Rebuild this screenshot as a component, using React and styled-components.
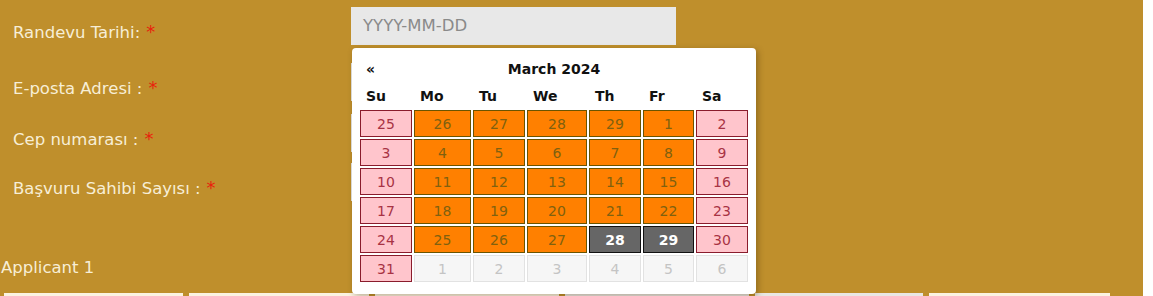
import React from "react";
import styled, { createGlobalStyle } from "styled-components";

const GlobalStyle = createGlobalStyle`
  html, body {
    margin: 0;
    padding: 0;
    background: #ffffff;
    overflow: hidden;
  }
  * {
    box-sizing: border-box;
  }
`;

const Page = styled.div`
  position: relative;
  width: 1143px;
  height: 296px;
  background: #bf8f2c;
  font-family: "DejaVu Sans", Tahoma, sans-serif;
  color: #f7eed6;
  overflow: hidden;
`;

const Form = styled.div`
  display: flex;
  flex-direction: column;
  padding-top: 7px;
`;

const Row = styled.div`
  display: grid;
  grid-template-columns: 351px 325px;
  height: ${(p) => p.h}px;
`;

const Label = styled.label`
  padding-left: 13px;
  padding-top: 15px;
  font-size: 16.5px;
  line-height: 20px;
`;

const Star = styled.span`
  color: #e8230c;
  margin-left: 6px;
  font-size: 18px;
`;

const Input = styled.div`
  height: 38px;
  background: #e8e8e8;
  color: #8a8a8a;
  font-size: 16.5px;
  line-height: 38px;
  padding-left: 12px;
`;

const Applicant = styled.div`
  margin-top: 45px;
  padding-left: 1px;
  font-size: 16.5px;
  line-height: 20px;
`;

const BottomRow = styled.div`
  display: flex;
  margin-top: 15px;
  padding-left: 4px;
`;

const Field = styled.div`
  width: ${(p) => p.w}px;
  margin-right: ${(p) => p.gap}px;
  height: 30px;
  background: ${(p) => (p.gray ? "#e9e7e3" : "#fbf3e1")};
`;

const Popup = styled.div`
  position: absolute;
  left: 352px;
  top: 48px;
  width: 404px;
  padding: 8px 8px 12px 8px;
  background: #ffffff;
  border-radius: 4px;
  box-shadow: 2px 2px 6px rgba(60, 40, 0, 0.35);
  font-family: "DejaVu Sans", Tahoma, sans-serif;
  color: #111;
`;

const Title = styled.div`
  display: flex;
  align-items: center;
  height: 26px;
  font-size: 14px;
  font-weight: bold;
`;

const Prev = styled.span`
  width: 146px;
  padding-left: 6px;
  font-size: 14px;
`;

const Month = styled.span`
  width: 96px;
  text-align: center;
`;

const Grid = styled.div`
  display: grid;
  grid-template-columns: 52px 57px 52px 60px 52px 51px 52px;
  column-gap: 2px;
  row-gap: 2px;
`;

const Head = styled.div`
  height: 27px;
  padding-left: 6px;
  padding-top: 6px;
  font-size: 14px;
  line-height: 16px;
  font-weight: bold;
  margin-bottom: -1px;
`;

const tones = {
  weekend: { bg: "#ffc5cc", border: "#8a1c2c", color: "#a83344" },
  week: { bg: "#ff8000", border: "#6a5400", color: "#80600f" },
  today: { bg: "#666666", border: "#111111", color: "#ffffff" },
  next: { bg: "#f6f6f6", border: "#e2e2e2", color: "#c4c4c4" },
};

const Cell = styled.div`
  height: 27px;
  border: 1px solid ${(p) => tones[p.tone].border};
  background: ${(p) => tones[p.tone].bg};
  color: ${(p) => tones[p.tone].color};
  font-size: 14px;
  font-weight: ${(p) => (p.tone === "today" ? "bold" : "normal")};
  display: flex;
  align-items: center;
  justify-content: center;
`;

const heads = ["Su", "Mo", "Tu", "We", "Th", "Fr", "Sa"];

const weeks = [
  [25, 26, 27, 28, 29, 1, 2],
  [3, 4, 5, 6, 7, 8, 9],
  [10, 11, 12, 13, 14, 15, 16],
  [17, 18, 19, 20, 21, 22, 23],
  [24, 25, 26, 27, 28, 29, 30],
  [31, 1, 2, 3, 4, 5, 6],
];

const toneFor = (w, d) => {
  if (w === 5 && d > 0) return "next";
  if (d === 0 || d === 6) return "weekend";
  if (w === 4 && (d === 4 || d === 5)) return "today";
  return "week";
};

export default function App() {
  return (
    <>
      <GlobalStyle />
      <Page>
        <Form>
          <Row h={56}>
            <Label>
              Randevu Tarihi:<Star>*</Star>
            </Label>
            <Input>YYYY-MM-DD</Input>
          </Row>
          <Row h={51}>
            <Label>
              E-posta Adresi :<Star>*</Star>
            </Label>
            <Input />
          </Row>
          <Row h={49}>
            <Label>
              Cep numarası :<Star>*</Star>
            </Label>
            <Input />
          </Row>
          <Row h={50}>
            <Label>
              Başvuru Sahibi Sayısı :<Star>*</Star>
            </Label>
            <Input />
          </Row>
          <Applicant>Applicant 1</Applicant>
          <BottomRow>
            <Field w={179} gap={6} />
            <Field w={180} gap={6} />
            <Field w={184} gap={6} />
            <Field w={184} gap={6} gray />
            <Field w={168} gap={6} gray />
            <Field w={181} gap={0} />
          </BottomRow>
        </Form>

        <Popup>
          <Title>
            <Prev>«</Prev>
            <Month>March 2024</Month>
          </Title>
          <Grid>
            {heads.map((h) => (
              <Head key={h}>{h}</Head>
            ))}
            {weeks.map((week, w) =>
              week.map((n, d) => (
                <Cell key={`${w}-${d}`} tone={toneFor(w, d)}>
                  {n}
                </Cell>
              ))
            )}
          </Grid>
        </Popup>
      </Page>
    </>
  );
}
